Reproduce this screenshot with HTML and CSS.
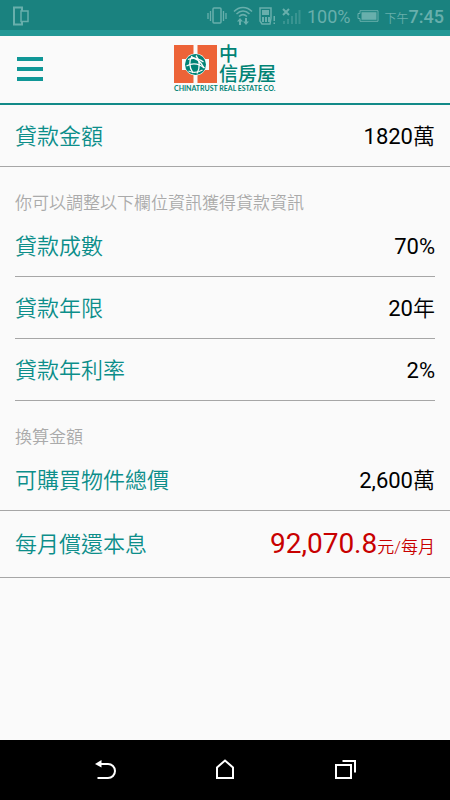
FILE: index.html
```html
<!DOCTYPE html>
<html lang="zh-Hant">
<head>
<meta charset="UTF-8" />
<meta name="viewport" content="width=device-width, initial-scale=1" />
<title>中信房屋 貸款試算</title>
<link rel="stylesheet" href="styles.css">
</head>
<body>

<div class="status-bar">
  <svg class="status-device" width="18" height="20" viewBox="0 0 18 20" fill="none" stroke="currentColor">
    <path d="M10 5V1.500H2v17h8V16" stroke-width="2"/>
    <path d="M9 5h7v10.500H9z" stroke-width="1.500"/>
  </svg>
  <div class="status-icons">
    <svg width="20" height="18" viewBox="0 0 20 18" fill="none" stroke="currentColor">
      <rect x="6" y="1" width="8" height="15" rx="1" stroke-width="1.500"/>
      <path d="M3.500 4v10M16.500 4v10M1 6v6M19 6v6" stroke-width="1.300"/>
    </svg>
    <svg width="20" height="20" viewBox="0 0 20 20" fill="none" stroke="currentColor">
      <path d="M1 5.500C6 0 14 0 19 5.500M3.500 8c4-4 9-4 13 0M6 10.500c2.500-2.500 5.500-2.500 8 0" stroke-width="1.500"/>
      <path d="M7 12l-3 3.500h2V19h2v-3.500h2zM13 19l3-3.500h-2V12h-2v3.500h-2z" fill="currentColor" stroke="none"/>
    </svg>
    <svg width="17" height="18" viewBox="0 0 17 18" fill="none" stroke="currentColor">
      <path d="M1 1h11v10l-1 6H3l-2-3z" stroke-width="1.500"/>
      <path d="M3 3h7v5H3zM3 10h2v5H3zM6 10h2v5H6zM9 10h2v5H9zM14.500 9h1.500v5h-1.500zM14.500 15.500h1.500V17h-1.500z" fill="currentColor" stroke="none"/>
    </svg>
    <svg width="19" height="17" viewBox="0 0 19 17" fill="none" stroke="currentColor">
      <path d="M1 1l6 6M7 1L1 7" stroke-width="2"/>
      <path d="M1 13h2v3H1zM5 11h2v5H5zM9 8h2v8H9zM13 5h2v11h-2zM16.500 2h2v14h-2z" fill="currentColor" stroke="none" opacity=".4"/>
    </svg>
    <span class="battery-text">100%</span>
    <svg width="22" height="12" viewBox="0 0 22 12" fill="none" stroke="currentColor">
      <path d="M3 .7h18v10.600H3V8.500H1v-5h2z"/>
      <path d="M4.500 2.200h15v7.600h-15z" fill="currentColor" stroke="none"/>
    </svg>
    <span class="clock"><small>下午</small>7:45</span>
  </div>
</div>

<header class="header">
  <button class="menu-btn" type="button" aria-label="選單">
    <span></span>
    <span></span>
    <span></span>
  </button>
  <svg class="logo" width="102" height="50" viewBox="0 0 102 50" role="img" aria-label="中信房屋">
    <path d="M0 1h19.500v12h-3q-3 0-4 2H8v11h4.500q1 2 4 2h3v11H0zM23.500 1H43v38H23.500V28h3q3 0 4-2H35V15h-4.500q-1-2-4-2h-3z" fill="#ed6338"/>
    <circle cx="21.500" cy="20.500" r="11" fill="#fafafa"/>
    <circle cx="21.500" cy="20.500" r="10.500" fill="#008375"/>
    <g fill="none" stroke="#fafafa" stroke-width="1.300">
      <path d="M14 15.500q8-3 15.500 2.500M12.500 22q9-5 18 2M14.500 27q7 3 14-1"/>
      <path d="M18 12q-5 8 1 17M22 11.500q6 8 1 18M17 13q9 2 13 11"/>
    </g>
    <text class="logo-name" x="45" y="17">中</text>
    <text class="logo-name" x="45" y="37">信房屋</text>
    <text class="logo-sub" x="0" y="47">CHINATRUST REAL ESTATE CO.</text>
  </svg>
</header>

<main class="content">
  <div class="row">
    <span class="label">貸款金額</span>
    <span class="value">1820<span class="unit">萬</span></span>
  </div>

  <p class="hint">你可以調整以下欄位資訊獲得貸款資訊</p>
  <div class="fields">
    <button class="row" type="button">
      <span class="label">貸款成數</span>
      <span class="value">70%</span>
    </button>
    <button class="row" type="button">
      <span class="label">貸款年限</span>
      <span class="value">20<span class="unit">年</span></span>
    </button>
    <button class="row" type="button">
      <span class="label">貸款年利率</span>
      <span class="value">2%</span>
    </button>
  </div>

  <p class="hint">換算金額</p>
  <div class="row">
    <span class="label">可購買物件總價</span>
    <span class="value">2,600<span class="unit">萬</span></span>
  </div>
  <div class="row row-total">
    <span class="label">每月償還本息</span>
    <span class="value total">92,070.8<small>元/每月</small></span>
  </div>
</main>

<nav class="nav-bar">
  <button type="button" aria-label="返回">
    <svg width="24" height="24" viewBox="0 0 24 24" fill="none" stroke="#fff" stroke-width="2">
      <path d="M6 6h9a7 7 0 0 1 0 14H4.500"/>
      <path d="M2 6l6.500-4v7.500z" fill="#fff" stroke="none"/>
    </svg>
  </button>
  <button type="button" aria-label="首頁">
    <svg width="24" height="24" viewBox="0 0 24 24" fill="none" stroke="#fff" stroke-width="2">
      <path d="M4 20V9.500l8-7 8 7V20z"/>
    </svg>
  </button>
  <button type="button" aria-label="最近使用">
    <svg width="24" height="24" viewBox="0 0 24 24" fill="none" stroke="#fff" stroke-width="2">
      <path d="M3 7h15v13H3z"/>
      <path d="M9.500 3H22v11.500"/>
    </svg>
  </button>
</nav>

</body>
</html>
```
FILE: styles.css
```css
* {
  box-sizing: border-box;
}

body {
  margin: 0;
  min-height: 100vh;
  display: flex;
  flex-direction: column;
  background: #fafafa;
  color: #000;
  font-family: Roboto, "Noto Sans CJK TC", sans-serif;
}

button {
  margin: 0;
  padding: 0;
  border: none;
  background: none;
  color: inherit;
  font: inherit;
  cursor: pointer;
}

/* Phone status bar */
.status-bar {
  height: 36px;
  padding: 2px 6px 0 12px;
  display: flex;
  align-items: center;
  justify-content: space-between;
  background: #1a827f;
  border-bottom: 6px solid #229896;
  color: #68afac;
}

.status-icons {
  display: flex;
  align-items: center;
  gap: 6px;
}

.battery-text {
  font-size: 18px;
}

.clock {
  font-size: 18px;
  font-weight: 500;
  white-space: nowrap;
}

.clock small {
  font-size: 12px;
  font-weight: 350;
}

/* Header with menu and logo */
.header {
  height: 69px;
  padding: 0 17px 2px;
  display: grid;
  grid-template-columns: 1fr auto 1fr;
  align-items: center;
  border-bottom: 2px solid #128a88;
}

.menu-btn {
  width: 26px;
  display: flex;
  flex-direction: column;
  gap: 6px;
}

.menu-btn span {
  height: 4px;
  background: #109797;
}

.logo {
  display: block;
  overflow: visible;
}

.logo-name {
  fill: #008375;
  font-family: "Noto Sans CJK TC", sans-serif;
  font-size: 19px;
  font-weight: 500;
}

.logo-sub {
  fill: #008375;
  font-family: Lato, sans-serif;
  font-size: 7px;
  font-weight: 700;
}

/* Loan rows */
.content {
  flex: 1;
}

.row {
  width: 100%;
  height: 62px;
  padding: 2px 15px 0;
  display: flex;
  align-items: center;
  justify-content: space-between;
  border-bottom: 1px solid #a6a6a6;
  font-size: 22px;
  line-height: 32px;
}

.fields {
  padding: 0 15px;
}

.fields .row {
  padding: 2px 0 0;
}

.label {
  color: #0c8e8a;
  font-weight: 350;
}

.unit {
  font-weight: 350;
}

.hint {
  margin: 0;
  padding: 25px 15px 0;
  color: #aaa;
  font-size: 17px;
  font-weight: 350;
  line-height: 23px;
}

.row-total {
  height: 67px;
}

.total {
  color: #c80000;
  font-size: 28px;
}

.total small {
  font-size: 17px;
  font-weight: 350;
}

/* Phone navigation bar */
.nav-bar {
  height: 60px;
  padding: 0 45px;
  display: flex;
  background: #000;
}

.nav-bar button {
  flex: 1;
  display: flex;
  align-items: center;
  justify-content: center;
}
```
